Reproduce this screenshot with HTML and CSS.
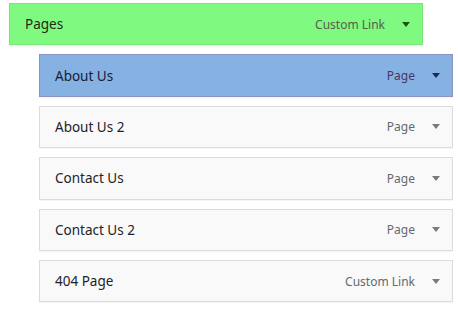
FILE: index.html
```html
<!DOCTYPE html>
<html lang="en">
<head>
    <meta charset="UTF-8">
    <meta name="viewport" content="width=device-width, initial-scale=1.0">
    <title>Menu Structure</title>
    <link rel="stylesheet" href="styles.css">
</head>
<body>
    <ul class="menu">
        <li class="menu-item depth-0 is-dragging">
            <div class="menu-item-bar">
                <span class="item-title">Pages</span>
                <span class="item-type">Custom Link</span>
                <span class="item-edit"></span>
            </div>
        </li>
        <li class="menu-item depth-1 is-target">
            <div class="menu-item-bar">
                <span class="item-title">About Us</span>
                <span class="item-type">Page</span>
                <span class="item-edit"></span>
            </div>
        </li>
        <li class="menu-item depth-1">
            <div class="menu-item-bar">
                <span class="item-title">About Us 2</span>
                <span class="item-type">Page</span>
                <span class="item-edit"></span>
            </div>
        </li>
        <li class="menu-item depth-1">
            <div class="menu-item-bar">
                <span class="item-title">Contact Us</span>
                <span class="item-type">Page</span>
                <span class="item-edit"></span>
            </div>
        </li>
        <li class="menu-item depth-1">
            <div class="menu-item-bar">
                <span class="item-title">Contact Us 2</span>
                <span class="item-type">Page</span>
                <span class="item-edit"></span>
            </div>
        </li>
        <li class="menu-item depth-1">
            <div class="menu-item-bar">
                <span class="item-title">404 Page</span>
                <span class="item-type">Custom Link</span>
                <span class="item-edit"></span>
            </div>
        </li>
    </ul>
</body>
</html>
```

FILE: styles.css
```css
:root {
    --bar-bg: #f9f9f9;
    --bar-border: #dcdcde;
    --title-color: #1d2327;
    --type-color: #646970;
    --arrow-color: #787c82;
}
body {
    margin: 0;
    padding: 3px 0 0 9px;
    background: #ffffff;
    font-family: "Noto Sans", "Open Sans", sans-serif;
    font-size: 13px;
}
.menu {
    list-style: none;
    margin: 0;
    padding: 0;
}
.menu-item {
    width: 414px;
    margin-bottom: 9px;
}
.depth-1 {
    margin-left: 30px;
}
.menu-item-bar {
    box-sizing: border-box;
    height: 42.4px;
    display: flex;
    align-items: center;
    padding: 0 12px 0 15px;
    background: var(--bar-bg);
    border: 1px solid var(--bar-border);
    box-shadow: 0 1px 1px rgba(0, 0, 0, 0.04);
}
.item-title {
    flex: 1;
    color: var(--title-color);
    font-size: 13.5px;
}
.item-type {
    color: var(--type-color);
    font-size: 12px;
}
.item-edit {
    width: 0;
    height: 0;
    margin-left: 17px;
    border-left: 4px solid transparent;
    border-right: 4px solid transparent;
    border-top: 5px solid var(--arrow-color);
}
.is-dragging .menu-item-bar {
    background: #80f981;
    border-color: #7be57c;
    box-shadow: 0 2px 2px rgba(0, 0, 0, 0.06);
}
.is-dragging .item-title {
    color: #1f2a14;
}
.is-dragging .item-type {
    color: #566048;
}
.is-dragging .item-edit {
    border-top-color: #145a14;
}
.is-target .menu-item-bar {
    background: #85b1e3;
    border-color: #8b93c4;
}
.is-target .item-title {
    color: #131d33;
}
.is-target .item-type {
    color: #4a3560;
}
.is-target .item-edit {
    border-top-color: #1a2a55;
}
```
